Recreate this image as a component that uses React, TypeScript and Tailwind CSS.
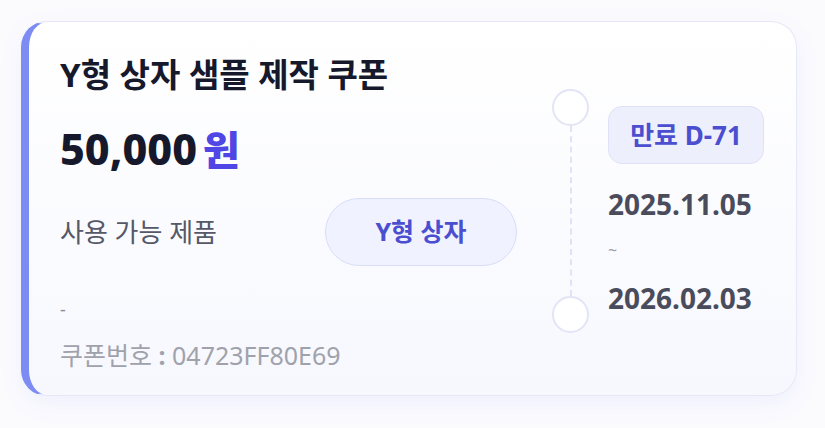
import React from "react";

export default function App() {
  const font = { fontFamily: '"Noto Sans", "Noto Sans CJK KR", sans-serif' };
  return (
    <div className="w-[825px] h-[428px] bg-[#fbfbfe] pt-[21px] pl-[21px]" style={font}>
      <div className="w-[776px] h-[375px] rounded-[26px] border border-[#e6e8f7] border-l-[8px] border-l-[#7c8cf3] bg-gradient-to-b from-white to-[#f7f8fe] shadow-[0_8px_24px_rgba(99,102,241,0.08)] flex">
        <div className="flex-1 flex flex-col pl-[31px] pt-[33px]">
          <div className="text-[33px] leading-[40px] font-bold text-[#16182c] whitespace-nowrap">Y형 상자 샘플 제작 쿠폰</div>
          <div className="mt-[29px] flex items-baseline gap-[6px] h-[50px]">
            <span className="text-[43px] leading-[50px] font-extrabold text-[#16182c]">50,000</span>
            <span className="text-[40px] leading-[50px] font-extrabold text-[#4f46e5]">원</span>
          </div>
          <div className="mt-[24px] flex items-center h-[68px]">
            <span className="text-[26px] text-[#555866] w-[265px] whitespace-nowrap">사용 가능 제품</span>
            <span className="w-[192px] h-[68px] rounded-full bg-[#f0f3ff] border border-[#d8ddf8] flex items-center justify-center text-[25px] font-bold text-[#4b4fcf] whitespace-nowrap">Y형 상자</span>
          </div>
          <div className="mt-[31px] text-[18px] text-[#8a8c99] leading-[24px]">-</div>
          <div className="mt-[18px] text-[25px] text-[#a0a2ab] leading-[32px] whitespace-nowrap">
            쿠폰번호 <span className="font-bold">:</span> 04723FF80E69
          </div>
        </div>
        <div className="w-[37px] flex flex-col items-center pt-[67px] mr-[19px]">
          <div className="w-[37px] h-[37px] rounded-full border-2 border-[#e3e5f6] bg-white shrink-0" />
          <div className="h-[170px] border-l-2 border-dashed border-[#e0e3f5]" />
          <div className="w-[37px] h-[37px] rounded-full border-2 border-[#e3e5f6] bg-white shrink-0" />
        </div>
        <div className="w-[188px] flex flex-col pt-[84px]">
          <div className="w-[156px] h-[58px] rounded-[14px] bg-[#eeeffd] border border-[#dfe1f7] flex items-center justify-center text-[26px] font-bold text-[#4b4fcf] whitespace-nowrap">만료 D-71</div>
          <div className="mt-[23px] text-[28px] font-bold text-[#4a4c5c] leading-[34px]">2025.11.05</div>
          <div className="mt-[19px] text-[16px] text-[#9a9caa] leading-[20px]">~</div>
          <div className="mt-[21px] text-[28px] font-bold text-[#4a4c5c] leading-[34px]">2026.02.03</div>
        </div>
      </div>
    </div>
  );
}
